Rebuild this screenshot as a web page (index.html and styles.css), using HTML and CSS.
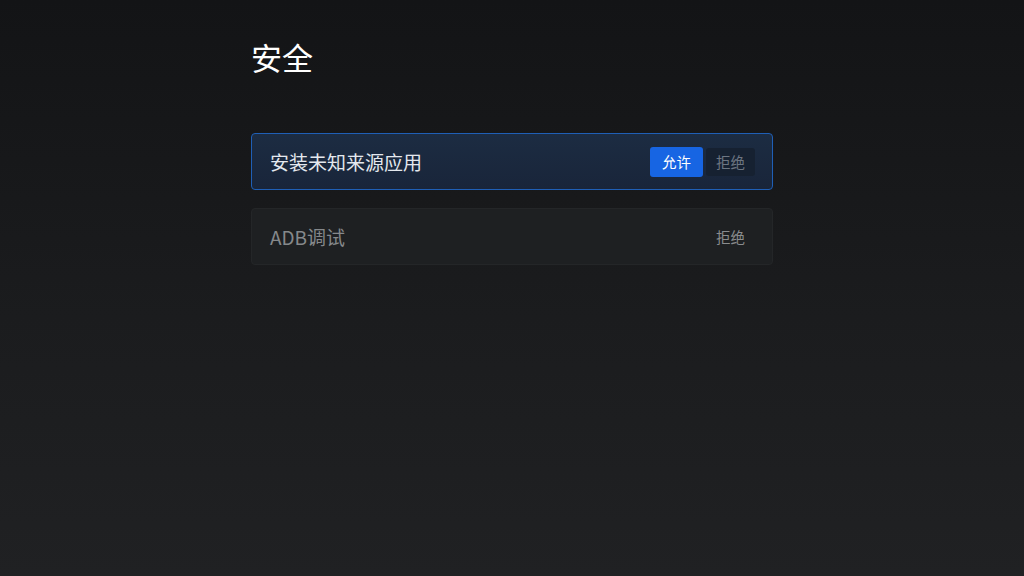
FILE: index.html
```html
<!DOCTYPE html>
<html>
<head>
  <title>安全</title>
  <link rel="stylesheet" href="styles.css">
</head>
<body>
  <div class="settings-page">
    <h1 class="settings-title">安全</h1>
    <div class="setting-row focused">
      <span class="setting-label">安装未知来源应用</span>
      <div class="option-group">
        <span class="option selected">允许</span>
        <span class="option">拒绝</span>
      </div>
    </div>
    <div class="setting-row">
      <span class="setting-label">ADB调试</span>
      <div class="option-group">
        <span class="option plain">拒绝</span>
      </div>
    </div>
  </div>
</body>
</html>
```

FILE: styles.css
```css
html, body {
  height: 100%;
}

body {
  margin: 0;
  background: linear-gradient(to bottom, #131416 0%, #1b1c1e 55%, #202123 100%);
  font-family: "Noto Sans CJK SC", "Noto Sans", sans-serif;
  color: #ffffff;
}

.settings-page {
  width: 522px;
  padding: 37px 0 0 251px;
}

.settings-title {
  margin: 0 0 56px;
  font-size: 31px;
  line-height: 40px;
  font-weight: normal;
}

.setting-row {
  display: flex;
  align-items: center;
  justify-content: space-between;
  height: 55px;
  padding: 0 17px 0 18px;
  margin-bottom: 18px;
  background-color: #1e2022;
  border: 1px solid #242628;
  border-radius: 4px;
}

.setting-row.focused {
  background: linear-gradient(to bottom, #1c2c42, #19253a);
  border-color: #1f5fb6;
}

.setting-label {
  font-size: 19px;
  color: #85888b;
}

.focused .setting-label {
  color: #e4e8ee;
}

.option-group {
  display: flex;
  align-items: center;
  gap: 3px;
}

.option {
  display: inline-block;
  width: 49px;
  height: 28px;
  line-height: 28px;
  text-align: center;
  font-size: 14.5px;
  color: #6d7682;
  background-color: #162131;
  border-radius: 3px;
}

.option.selected {
  width: 53px;
  height: 30px;
  line-height: 30px;
  color: #ffffff;
  background-color: #1765e3;
}

.option.plain {
  color: #8a8c8e;
  background: none;
}
```
